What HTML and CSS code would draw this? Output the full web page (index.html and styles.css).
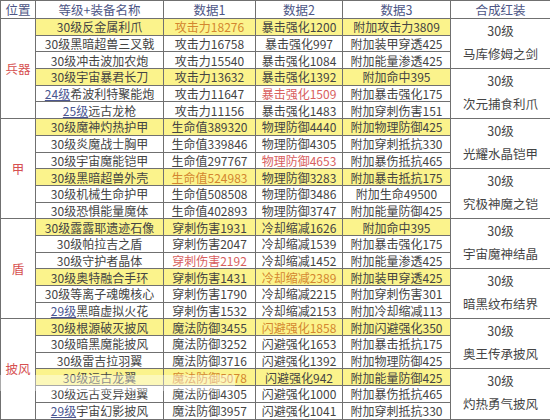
FILE: index.html
```html
<!DOCTYPE html>
<html lang="zh">
<head>
<meta charset="utf-8">
<link rel="stylesheet" href="styles.css">
</head>
<body>
<div class="wrap">
<table class="tbl">
  <colgroup>
    <col class="c1"><col class="c2"><col class="c3"><col class="c4"><col class="c5"><col class="c6">
  </colgroup>
  <thead>
    <tr class="head"><th>位置</th><th>等级+装备名称</th><th>数据1</th><th>数据2</th><th>数据3</th><th>合成红装</th></tr>
  </thead>
  <tbody>
    <tr><td class="pos" rowspan="6">兵器</td><td class="y">30级反金属利爪</td><td class="y org">攻击力18276</td><td class="y">暴击强化1200</td><td class="y">附加攻击力3809</td><td class="red" rowspan="3">30级<br>马库修姆之剑</td></tr>
    <tr><td>30级黑暗超兽三叉戟</td><td>攻击力16758</td><td>暴击强化997</td><td>附加装甲穿透425</td></tr>
    <tr><td>30级冲击波加农炮</td><td>攻击力15540</td><td>暴击强化1084</td><td>附加能量渗透425</td></tr>
    <tr><td class="y">30级宇宙暴君长刀</td><td class="y">攻击力13632</td><td class="y">暴击强化1392</td><td class="y">附加命中395</td><td class="red" rowspan="3">30级<br>次元捕食利爪</td></tr>
    <tr><td><u class="lv">24级</u>希波利特聚能炮</td><td>攻击力11647</td><td class="rd">暴击强化1509</td><td>附加暴击强化175</td></tr>
    <tr><td><u class="lv">25级</u>远古龙枪</td><td>攻击力11156</td><td>暴击强化1483</td><td>附加穿刺伤害151</td></tr>

    <tr><td class="pos" rowspan="6">甲</td><td class="y">30级魔神灼热护甲</td><td class="y">生命值389320</td><td class="y">物理防御4440</td><td class="y">附加物理防御425</td><td class="red" rowspan="3">30级<br>光耀水晶铠甲</td></tr>
    <tr><td>30级炎魔战士胸甲</td><td>生命值339846</td><td>物理防御4305</td><td>附加穿刺抵抗330</td></tr>
    <tr><td>30级宇宙魔能铠甲</td><td>生命值297767</td><td class="rd">物理防御4653</td><td>附加暴伤抵抗465</td></tr>
    <tr><td class="y">30级黑暗超兽外壳</td><td class="y org">生命值524983</td><td class="y">物理防御3283</td><td class="y">附加暴击抵抗175</td><td class="red" rowspan="3">30级<br>究极神魔之铠</td></tr>
    <tr><td>30级机械生命护甲</td><td>生命值508508</td><td>物理防御3486</td><td>附加生命49500</td></tr>
    <tr><td>30级恐惧能量魔体</td><td>生命值402893</td><td>物理防御3747</td><td>附加能量防御425</td></tr>

    <tr><td class="pos" rowspan="6">盾</td><td class="y">30级露露耶遗迹石像</td><td class="y">穿刺伤害1931</td><td class="y">冷却缩减1626</td><td class="y">附加命中395</td><td class="red" rowspan="3">30级<br>宇宙魔神结晶</td></tr>
    <tr><td>30级帕拉吉之盾</td><td>穿刺伤害2047</td><td>冷却缩减1539</td><td>附加暴击强化175</td></tr>
    <tr><td>30级守护者晶体</td><td class="rd">穿刺伤害2192</td><td>冷却缩减1452</td><td>附加能量渗透425</td></tr>
    <tr><td class="y">30级奥特融合手环</td><td class="y">穿刺伤害1431</td><td class="y org">冷却缩减2389</td><td class="y">附加装甲穿透425</td><td class="red" rowspan="3">30级<br>暗黑纹布结界</td></tr>
    <tr><td>30级等离子魂魄核心</td><td>穿刺伤害1790</td><td>冷却缩减2215</td><td>附加穿刺伤害301</td></tr>
    <tr><td><u class="lv">29级</u>黑暗虚拟火花</td><td>穿刺伤害1532</td><td>冷却缩减2153</td><td>附加冷却缩减113</td></tr>

    <tr><td class="pos" rowspan="6">披风</td><td class="y">30级根源破灭披风</td><td class="y">魔法防御3455</td><td class="y org">闪避强化1858</td><td class="y">附加闪避强化350</td><td class="red" rowspan="3">30级<br>奥王传承披风</td></tr>
    <tr><td>30级暗黑魔能披风</td><td>魔法防御3252</td><td>闪避强化1653</td><td>附加暴击抵抗175</td></tr>
    <tr><td>30级雷吉拉羽翼</td><td>魔法防御3716</td><td>闪避强化1392</td><td>附加物理防御425</td></tr>
    <tr><td class="y">30级远古龙翼</td><td class="y org">魔法防御5078</td><td class="y">闪避强化942</td><td class="y">附加能量防御425</td><td class="red" rowspan="3">30级<br>灼热勇气披风</td></tr>
    <tr><td>30级远古变异翅翼</td><td>魔法防御4305</td><td>闪避强化1000</td><td>附加暴伤抵抗465</td></tr>
    <tr><td><u class="lv">29级</u>宇宙幻影披风</td><td>魔法防御3957</td><td>闪避强化1041</td><td>附加穿刺抵抗330</td></tr>
  </tbody>
</table>
<div class="mark"></div>
</div>
</body>
</html>
```

FILE: styles.css
```css
html, body {
  margin: 0;
  padding: 0;
  background: #ffffff;
}
.wrap {
  position: relative;
  width: 550px;
  height: 420px;
  overflow: hidden;
}
.tbl {
  width: 550px;
  border-collapse: collapse;
  table-layout: fixed;
  font-family: "Noto Sans CJK SC", "Noto Sans", sans-serif;
  font-size: 12px;
  color: #444444;
}
.c1 { width: 35px; }
.c2 { width: 128px; }
.c3 { width: 92px; }
.c4 { width: 87px; }
.c5 { width: 108px; }
.c6 { width: 100px; }
.tbl th, .tbl td {
  border: 1px solid #707070;
  padding: 0;
  text-align: center;
  white-space: nowrap;
  line-height: 15px;
  overflow: hidden;
}
.head th {
  height: 17px;
  font-weight: normal;
  font-size: 12.5px;
  color: #4d5686;
  background: #ffffff;
}
.tbl tbody tr {
  height: 16.7px;
}
.tbl td.y {
  background: #fbf38c;
}
.tbl td.org {
  color: #d3862f;
}
.tbl td.rd {
  color: #d86060;
}
.tbl td.pos {
  color: #d65050;
  font-size: 12.5px;
}
.tbl td.red {
  font-size: 12.5px;
  line-height: 23px;
  padding-bottom: 3px;
}
.lv {
  color: #4a5590;
  text-decoration: underline;
}
.mark {
  position: absolute;
  left: 0;
  top: 375px;
  width: 235px;
  height: 16px;
  background: rgba(255, 255, 255, 0.4);
}
```
